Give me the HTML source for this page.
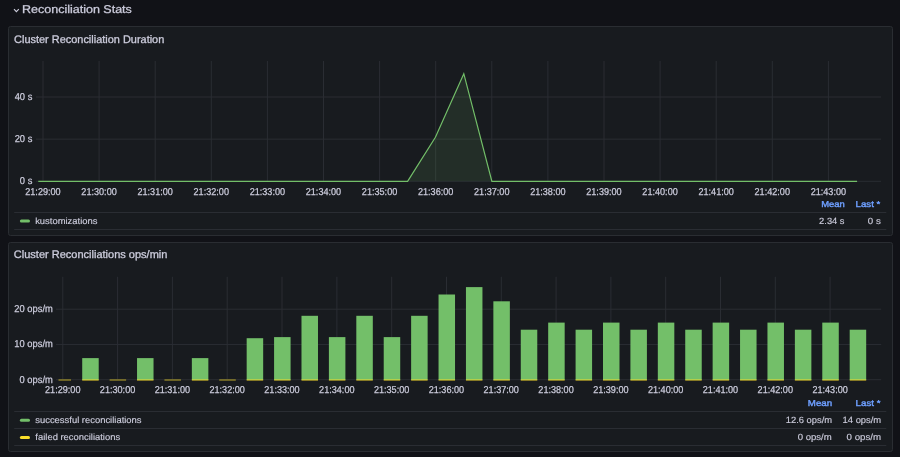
<!DOCTYPE html><html><head><meta charset="utf-8"><style>
html,body{margin:0;padding:0;width:900px;height:457px;overflow:hidden;background:#111217;}
svg{position:absolute;left:0;top:0;will-change:transform;}
text{font-family:"Liberation Sans", sans-serif;text-rendering:geometricPrecision;}
</style></head><body>
<svg width="900" height="457" viewBox="0 0 900 457">
<rect x="8.5" y="26.5" width="884" height="209" rx="2" fill="#181b1f" stroke="#2a2d32" stroke-width="1"/>
<rect x="8.5" y="242.5" width="884" height="209" rx="2" fill="#181b1f" stroke="#2a2d32" stroke-width="1"/>
<path d="M14 9.2 L16.4 11.6 L18.8 9.2" fill="none" stroke="#ccccdc" stroke-width="1.15"/>
<text x="21.97" y="13.25" font-size="11.3" fill="#ccccdc" stroke="#ccccdc" stroke-width="0.28" textLength="109.88" lengthAdjust="spacingAndGlyphs">Reconciliation Stats</text>
<text x="14.05" y="42.80" font-size="10.9" fill="#ccccdc" stroke="#ccccdc" stroke-width="0.3" textLength="150.25" lengthAdjust="spacingAndGlyphs">Cluster Reconciliation Duration</text>
<text x="13.85" y="258.30" font-size="10.9" fill="#ccccdc" stroke="#ccccdc" stroke-width="0.3" textLength="153.56" lengthAdjust="spacingAndGlyphs">Cluster Reconciliations ops/min</text>
<line x1="43.0" y1="61.0" x2="43.0" y2="181.3" stroke="#2a2d33" stroke-width="1"/>
<text x="25.25" y="195.00" font-size="10.0" fill="#ccccdc" stroke="#ccccdc" stroke-width="0.25" textLength="35.41" lengthAdjust="spacingAndGlyphs">21:29:00</text>
<line x1="99.1" y1="61.0" x2="99.1" y2="181.3" stroke="#2a2d33" stroke-width="1"/>
<text x="81.35" y="195.00" font-size="10.0" fill="#ccccdc" stroke="#ccccdc" stroke-width="0.25" textLength="35.41" lengthAdjust="spacingAndGlyphs">21:30:00</text>
<line x1="155.2" y1="61.0" x2="155.2" y2="181.3" stroke="#2a2d33" stroke-width="1"/>
<text x="137.45" y="195.00" font-size="10.0" fill="#ccccdc" stroke="#ccccdc" stroke-width="0.25" textLength="35.41" lengthAdjust="spacingAndGlyphs">21:31:00</text>
<line x1="211.3" y1="61.0" x2="211.3" y2="181.3" stroke="#2a2d33" stroke-width="1"/>
<text x="193.55" y="195.00" font-size="10.0" fill="#ccccdc" stroke="#ccccdc" stroke-width="0.25" textLength="35.41" lengthAdjust="spacingAndGlyphs">21:32:00</text>
<line x1="267.4" y1="61.0" x2="267.4" y2="181.3" stroke="#2a2d33" stroke-width="1"/>
<text x="249.65" y="195.00" font-size="10.0" fill="#ccccdc" stroke="#ccccdc" stroke-width="0.25" textLength="35.41" lengthAdjust="spacingAndGlyphs">21:33:00</text>
<line x1="323.5" y1="61.0" x2="323.5" y2="181.3" stroke="#2a2d33" stroke-width="1"/>
<text x="305.75" y="195.00" font-size="10.0" fill="#ccccdc" stroke="#ccccdc" stroke-width="0.25" textLength="35.41" lengthAdjust="spacingAndGlyphs">21:34:00</text>
<line x1="379.6" y1="61.0" x2="379.6" y2="181.3" stroke="#2a2d33" stroke-width="1"/>
<text x="361.85" y="195.00" font-size="10.0" fill="#ccccdc" stroke="#ccccdc" stroke-width="0.25" textLength="35.41" lengthAdjust="spacingAndGlyphs">21:35:00</text>
<line x1="435.7" y1="61.0" x2="435.7" y2="181.3" stroke="#2a2d33" stroke-width="1"/>
<text x="417.95" y="195.00" font-size="10.0" fill="#ccccdc" stroke="#ccccdc" stroke-width="0.25" textLength="35.41" lengthAdjust="spacingAndGlyphs">21:36:00</text>
<line x1="491.8" y1="61.0" x2="491.8" y2="181.3" stroke="#2a2d33" stroke-width="1"/>
<text x="474.05" y="195.00" font-size="10.0" fill="#ccccdc" stroke="#ccccdc" stroke-width="0.25" textLength="35.41" lengthAdjust="spacingAndGlyphs">21:37:00</text>
<line x1="547.9" y1="61.0" x2="547.9" y2="181.3" stroke="#2a2d33" stroke-width="1"/>
<text x="530.15" y="195.00" font-size="10.0" fill="#ccccdc" stroke="#ccccdc" stroke-width="0.25" textLength="35.41" lengthAdjust="spacingAndGlyphs">21:38:00</text>
<line x1="604.0" y1="61.0" x2="604.0" y2="181.3" stroke="#2a2d33" stroke-width="1"/>
<text x="586.25" y="195.00" font-size="10.0" fill="#ccccdc" stroke="#ccccdc" stroke-width="0.25" textLength="35.41" lengthAdjust="spacingAndGlyphs">21:39:00</text>
<line x1="660.1" y1="61.0" x2="660.1" y2="181.3" stroke="#2a2d33" stroke-width="1"/>
<text x="642.35" y="195.00" font-size="10.0" fill="#ccccdc" stroke="#ccccdc" stroke-width="0.25" textLength="35.41" lengthAdjust="spacingAndGlyphs">21:40:00</text>
<line x1="716.2" y1="61.0" x2="716.2" y2="181.3" stroke="#2a2d33" stroke-width="1"/>
<text x="698.45" y="195.00" font-size="10.0" fill="#ccccdc" stroke="#ccccdc" stroke-width="0.25" textLength="35.41" lengthAdjust="spacingAndGlyphs">21:41:00</text>
<line x1="772.3" y1="61.0" x2="772.3" y2="181.3" stroke="#2a2d33" stroke-width="1"/>
<text x="754.55" y="195.00" font-size="10.0" fill="#ccccdc" stroke="#ccccdc" stroke-width="0.25" textLength="35.41" lengthAdjust="spacingAndGlyphs">21:42:00</text>
<line x1="828.4" y1="61.0" x2="828.4" y2="181.3" stroke="#2a2d33" stroke-width="1"/>
<text x="810.65" y="195.00" font-size="10.0" fill="#ccccdc" stroke="#ccccdc" stroke-width="0.25" textLength="35.41" lengthAdjust="spacingAndGlyphs">21:43:00</text>
<line x1="36" y1="97.0" x2="881" y2="97.0" stroke="#2a2d33" stroke-width="1"/>
<text x="14.67" y="99.85" font-size="10.0" fill="#ccccdc" stroke="#ccccdc" stroke-width="0.25" textLength="17.67" lengthAdjust="spacingAndGlyphs">40 s</text>
<line x1="36" y1="139.15" x2="881" y2="139.15" stroke="#2a2d33" stroke-width="1"/>
<text x="14.67" y="142.00" font-size="10.0" fill="#ccccdc" stroke="#ccccdc" stroke-width="0.25" textLength="17.67" lengthAdjust="spacingAndGlyphs">20 s</text>
<line x1="36" y1="181.3" x2="881" y2="181.3" stroke="#2a2d33" stroke-width="1"/>
<text x="19.86" y="184.15" font-size="10.0" fill="#ccccdc" stroke="#ccccdc" stroke-width="0.25" textLength="12.47" lengthAdjust="spacingAndGlyphs">0 s</text>
<path d="M407.6,181.3 L435.4,137.2 L463.8,73.7 L491.9,181.3 Z" fill="#73bf69" fill-opacity="0.12"/>
<path d="M38.3,181.3 L407.6,181.3 L435.4,137.2 L463.8,73.7 L491.9,181.3 L857.1,181.3" fill="none" stroke="#73bf69" stroke-width="1.2"/>
<text x="821.23" y="207.10" font-size="8.6" fill="#6e9fff" stroke="#6e9fff" stroke-width="0.4" textLength="23.58" lengthAdjust="spacingAndGlyphs">Mean</text>
<text x="855.61" y="207.10" font-size="8.6" fill="#6e9fff" stroke="#6e9fff" stroke-width="0.4" textLength="24.74" lengthAdjust="spacingAndGlyphs">Last *</text>
<line x1="14.2" y1="212.5" x2="886.3" y2="212.5" stroke="#2a2d33" stroke-width="1"/>
<line x1="14.2" y1="229.5" x2="886.3" y2="229.5" stroke="#2a2d33" stroke-width="1"/>
<rect x="19.9" y="219.5" width="10.1" height="3" rx="1.5" fill="#73bf69"/>
<text x="35.17" y="224.00" font-size="9.0" fill="#ccccdc" stroke="#ccccdc" stroke-width="0.15" textLength="62.27" lengthAdjust="spacingAndGlyphs">kustomizations</text>
<text x="819.13" y="224.30" font-size="9.0" fill="#ccccdc" stroke="#ccccdc" stroke-width="0.15" textLength="25.40" lengthAdjust="spacingAndGlyphs">2.34 s</text>
<text x="867.82" y="224.30" font-size="9.0" fill="#ccccdc" stroke="#ccccdc" stroke-width="0.15" textLength="12.93" lengthAdjust="spacingAndGlyphs">0 s</text>
<line x1="62.8" y1="276.8" x2="62.8" y2="379.7" stroke="#2a2d33" stroke-width="1"/>
<text x="45.05" y="393.00" font-size="10.0" fill="#ccccdc" stroke="#ccccdc" stroke-width="0.25" textLength="35.41" lengthAdjust="spacingAndGlyphs">21:29:00</text>
<line x1="117.6" y1="276.8" x2="117.6" y2="379.7" stroke="#2a2d33" stroke-width="1"/>
<text x="99.86" y="393.00" font-size="10.0" fill="#ccccdc" stroke="#ccccdc" stroke-width="0.25" textLength="35.41" lengthAdjust="spacingAndGlyphs">21:30:00</text>
<line x1="172.4" y1="276.8" x2="172.4" y2="379.7" stroke="#2a2d33" stroke-width="1"/>
<text x="154.67" y="393.00" font-size="10.0" fill="#ccccdc" stroke="#ccccdc" stroke-width="0.25" textLength="35.41" lengthAdjust="spacingAndGlyphs">21:31:00</text>
<line x1="227.2" y1="276.8" x2="227.2" y2="379.7" stroke="#2a2d33" stroke-width="1"/>
<text x="209.48" y="393.00" font-size="10.0" fill="#ccccdc" stroke="#ccccdc" stroke-width="0.25" textLength="35.41" lengthAdjust="spacingAndGlyphs">21:32:00</text>
<line x1="282.0" y1="276.8" x2="282.0" y2="379.7" stroke="#2a2d33" stroke-width="1"/>
<text x="264.29" y="393.00" font-size="10.0" fill="#ccccdc" stroke="#ccccdc" stroke-width="0.25" textLength="35.41" lengthAdjust="spacingAndGlyphs">21:33:00</text>
<line x1="336.9" y1="276.8" x2="336.9" y2="379.7" stroke="#2a2d33" stroke-width="1"/>
<text x="319.10" y="393.00" font-size="10.0" fill="#ccccdc" stroke="#ccccdc" stroke-width="0.25" textLength="35.41" lengthAdjust="spacingAndGlyphs">21:34:00</text>
<line x1="391.7" y1="276.8" x2="391.7" y2="379.7" stroke="#2a2d33" stroke-width="1"/>
<text x="373.91" y="393.00" font-size="10.0" fill="#ccccdc" stroke="#ccccdc" stroke-width="0.25" textLength="35.41" lengthAdjust="spacingAndGlyphs">21:35:00</text>
<line x1="446.5" y1="276.8" x2="446.5" y2="379.7" stroke="#2a2d33" stroke-width="1"/>
<text x="428.72" y="393.00" font-size="10.0" fill="#ccccdc" stroke="#ccccdc" stroke-width="0.25" textLength="35.41" lengthAdjust="spacingAndGlyphs">21:36:00</text>
<line x1="501.3" y1="276.8" x2="501.3" y2="379.7" stroke="#2a2d33" stroke-width="1"/>
<text x="483.53" y="393.00" font-size="10.0" fill="#ccccdc" stroke="#ccccdc" stroke-width="0.25" textLength="35.41" lengthAdjust="spacingAndGlyphs">21:37:00</text>
<line x1="556.1" y1="276.8" x2="556.1" y2="379.7" stroke="#2a2d33" stroke-width="1"/>
<text x="538.34" y="393.00" font-size="10.0" fill="#ccccdc" stroke="#ccccdc" stroke-width="0.25" textLength="35.41" lengthAdjust="spacingAndGlyphs">21:38:00</text>
<line x1="610.9" y1="276.8" x2="610.9" y2="379.7" stroke="#2a2d33" stroke-width="1"/>
<text x="593.15" y="393.00" font-size="10.0" fill="#ccccdc" stroke="#ccccdc" stroke-width="0.25" textLength="35.41" lengthAdjust="spacingAndGlyphs">21:39:00</text>
<line x1="665.7" y1="276.8" x2="665.7" y2="379.7" stroke="#2a2d33" stroke-width="1"/>
<text x="647.96" y="393.00" font-size="10.0" fill="#ccccdc" stroke="#ccccdc" stroke-width="0.25" textLength="35.41" lengthAdjust="spacingAndGlyphs">21:40:00</text>
<line x1="720.5" y1="276.8" x2="720.5" y2="379.7" stroke="#2a2d33" stroke-width="1"/>
<text x="702.77" y="393.00" font-size="10.0" fill="#ccccdc" stroke="#ccccdc" stroke-width="0.25" textLength="35.41" lengthAdjust="spacingAndGlyphs">21:41:00</text>
<line x1="775.3" y1="276.8" x2="775.3" y2="379.7" stroke="#2a2d33" stroke-width="1"/>
<text x="757.58" y="393.00" font-size="10.0" fill="#ccccdc" stroke="#ccccdc" stroke-width="0.25" textLength="35.41" lengthAdjust="spacingAndGlyphs">21:42:00</text>
<line x1="830.1" y1="276.8" x2="830.1" y2="379.7" stroke="#2a2d33" stroke-width="1"/>
<text x="812.39" y="393.00" font-size="10.0" fill="#ccccdc" stroke="#ccccdc" stroke-width="0.25" textLength="35.41" lengthAdjust="spacingAndGlyphs">21:43:00</text>
<line x1="56" y1="309.2" x2="881.2" y2="309.2" stroke="#2a2d33" stroke-width="1"/>
<text x="14.35" y="312.00" font-size="10.0" fill="#ccccdc" stroke="#ccccdc" stroke-width="0.25" textLength="38.46" lengthAdjust="spacingAndGlyphs">20 ops/m</text>
<line x1="56" y1="344.45" x2="881.2" y2="344.45" stroke="#2a2d33" stroke-width="1"/>
<text x="14.35" y="347.25" font-size="10.0" fill="#ccccdc" stroke="#ccccdc" stroke-width="0.25" textLength="38.46" lengthAdjust="spacingAndGlyphs">10 ops/m</text>
<line x1="56" y1="379.7" x2="881.2" y2="379.7" stroke="#2a2d33" stroke-width="1"/>
<text x="19.55" y="382.50" font-size="10.0" fill="#ccccdc" stroke="#ccccdc" stroke-width="0.25" textLength="33.26" lengthAdjust="spacingAndGlyphs">0 ops/m</text>
<rect x="58.50" y="379.40" width="12.5" height="1.2" fill="#fade2a" fill-opacity="0.6"/>
<rect x="82.21" y="358.10" width="16.5" height="21.90" fill="#73bf69"/>
<rect x="82.21" y="379.40" width="16.5" height="1.2" fill="#fade2a" fill-opacity="0.8"/>
<rect x="109.62" y="379.40" width="16.5" height="1.2" fill="#fade2a" fill-opacity="0.6"/>
<rect x="137.03" y="358.10" width="16.5" height="21.90" fill="#73bf69"/>
<rect x="137.03" y="379.40" width="16.5" height="1.2" fill="#fade2a" fill-opacity="0.8"/>
<rect x="164.44" y="379.40" width="16.5" height="1.2" fill="#fade2a" fill-opacity="0.6"/>
<rect x="191.85" y="358.10" width="16.5" height="21.90" fill="#73bf69"/>
<rect x="191.85" y="379.40" width="16.5" height="1.2" fill="#fade2a" fill-opacity="0.8"/>
<rect x="219.26" y="379.40" width="16.5" height="1.2" fill="#fade2a" fill-opacity="0.6"/>
<rect x="246.67" y="338.20" width="16.5" height="41.80" fill="#73bf69"/>
<rect x="246.67" y="379.40" width="16.5" height="1.2" fill="#fade2a" fill-opacity="0.8"/>
<rect x="274.08" y="337.10" width="16.5" height="42.90" fill="#73bf69"/>
<rect x="274.08" y="379.40" width="16.5" height="1.2" fill="#fade2a" fill-opacity="0.8"/>
<rect x="301.49" y="315.80" width="16.5" height="64.20" fill="#73bf69"/>
<rect x="301.49" y="379.40" width="16.5" height="1.2" fill="#fade2a" fill-opacity="0.8"/>
<rect x="328.90" y="337.10" width="16.5" height="42.90" fill="#73bf69"/>
<rect x="328.90" y="379.40" width="16.5" height="1.2" fill="#fade2a" fill-opacity="0.8"/>
<rect x="356.31" y="315.80" width="16.5" height="64.20" fill="#73bf69"/>
<rect x="356.31" y="379.40" width="16.5" height="1.2" fill="#fade2a" fill-opacity="0.8"/>
<rect x="383.72" y="337.10" width="16.5" height="42.90" fill="#73bf69"/>
<rect x="383.72" y="379.40" width="16.5" height="1.2" fill="#fade2a" fill-opacity="0.8"/>
<rect x="411.13" y="315.80" width="16.5" height="64.20" fill="#73bf69"/>
<rect x="411.13" y="379.40" width="16.5" height="1.2" fill="#fade2a" fill-opacity="0.8"/>
<rect x="438.54" y="294.50" width="16.5" height="85.50" fill="#73bf69"/>
<rect x="438.54" y="379.40" width="16.5" height="1.2" fill="#fade2a" fill-opacity="0.8"/>
<rect x="465.95" y="287.10" width="16.5" height="92.90" fill="#73bf69"/>
<rect x="465.95" y="379.40" width="16.5" height="1.2" fill="#fade2a" fill-opacity="0.8"/>
<rect x="493.36" y="301.30" width="16.5" height="78.70" fill="#73bf69"/>
<rect x="493.36" y="379.40" width="16.5" height="1.2" fill="#fade2a" fill-opacity="0.8"/>
<rect x="520.77" y="329.70" width="16.5" height="50.30" fill="#73bf69"/>
<rect x="520.77" y="379.40" width="16.5" height="1.2" fill="#fade2a" fill-opacity="0.8"/>
<rect x="548.18" y="322.60" width="16.5" height="57.40" fill="#73bf69"/>
<rect x="548.18" y="379.40" width="16.5" height="1.2" fill="#fade2a" fill-opacity="0.8"/>
<rect x="575.59" y="329.70" width="16.5" height="50.30" fill="#73bf69"/>
<rect x="575.59" y="379.40" width="16.5" height="1.2" fill="#fade2a" fill-opacity="0.8"/>
<rect x="603.00" y="322.60" width="16.5" height="57.40" fill="#73bf69"/>
<rect x="603.00" y="379.40" width="16.5" height="1.2" fill="#fade2a" fill-opacity="0.8"/>
<rect x="630.41" y="329.70" width="16.5" height="50.30" fill="#73bf69"/>
<rect x="630.41" y="379.40" width="16.5" height="1.2" fill="#fade2a" fill-opacity="0.8"/>
<rect x="657.82" y="322.60" width="16.5" height="57.40" fill="#73bf69"/>
<rect x="657.82" y="379.40" width="16.5" height="1.2" fill="#fade2a" fill-opacity="0.8"/>
<rect x="685.23" y="329.70" width="16.5" height="50.30" fill="#73bf69"/>
<rect x="685.23" y="379.40" width="16.5" height="1.2" fill="#fade2a" fill-opacity="0.8"/>
<rect x="712.64" y="322.60" width="16.5" height="57.40" fill="#73bf69"/>
<rect x="712.64" y="379.40" width="16.5" height="1.2" fill="#fade2a" fill-opacity="0.8"/>
<rect x="740.05" y="329.70" width="16.5" height="50.30" fill="#73bf69"/>
<rect x="740.05" y="379.40" width="16.5" height="1.2" fill="#fade2a" fill-opacity="0.8"/>
<rect x="767.46" y="322.60" width="16.5" height="57.40" fill="#73bf69"/>
<rect x="767.46" y="379.40" width="16.5" height="1.2" fill="#fade2a" fill-opacity="0.8"/>
<rect x="794.87" y="329.70" width="16.5" height="50.30" fill="#73bf69"/>
<rect x="794.87" y="379.40" width="16.5" height="1.2" fill="#fade2a" fill-opacity="0.8"/>
<rect x="822.28" y="322.60" width="16.5" height="57.40" fill="#73bf69"/>
<rect x="822.28" y="379.40" width="16.5" height="1.2" fill="#fade2a" fill-opacity="0.8"/>
<rect x="849.69" y="329.70" width="16.5" height="50.30" fill="#73bf69"/>
<rect x="849.69" y="379.40" width="16.5" height="1.2" fill="#fade2a" fill-opacity="0.8"/>
<text x="807.80" y="405.80" font-size="8.6" fill="#6e9fff" stroke="#6e9fff" stroke-width="0.4" textLength="24.32" lengthAdjust="spacingAndGlyphs">Mean</text>
<text x="855.60" y="405.80" font-size="8.6" fill="#6e9fff" stroke="#6e9fff" stroke-width="0.4" textLength="24.84" lengthAdjust="spacingAndGlyphs">Last *</text>
<line x1="14.2" y1="411.5" x2="886.3" y2="411.5" stroke="#2a2d33" stroke-width="1"/>
<line x1="14.2" y1="428.5" x2="886.3" y2="428.5" stroke="#2a2d33" stroke-width="1"/>
<line x1="14.2" y1="445.5" x2="886.3" y2="445.5" stroke="#2a2d33" stroke-width="1"/>
<rect x="19.9" y="418.7" width="10.1" height="3" rx="1.5" fill="#73bf69"/>
<rect x="19.9" y="435.9" width="10.1" height="3" rx="1.5" fill="#fade2a"/>
<text x="35.25" y="422.90" font-size="9.0" fill="#ccccdc" stroke="#ccccdc" stroke-width="0.15" textLength="106.29" lengthAdjust="spacingAndGlyphs">successful reconciliations</text>
<text x="35.37" y="440.00" font-size="9.0" fill="#ccccdc" stroke="#ccccdc" stroke-width="0.15" textLength="84.77" lengthAdjust="spacingAndGlyphs">failed reconciliations</text>
<text x="785.79" y="422.80" font-size="9.0" fill="#ccccdc" stroke="#ccccdc" stroke-width="0.15" textLength="46.32" lengthAdjust="spacingAndGlyphs">12.6 ops/m</text>
<text x="842.59" y="422.80" font-size="9.0" fill="#ccccdc" stroke="#ccccdc" stroke-width="0.15" textLength="38.63" lengthAdjust="spacingAndGlyphs">14 ops/m</text>
<text x="797.73" y="439.80" font-size="9.0" fill="#ccccdc" stroke="#ccccdc" stroke-width="0.15" textLength="34.00" lengthAdjust="spacingAndGlyphs">0 ops/m</text>
<text x="846.62" y="439.80" font-size="9.0" fill="#ccccdc" stroke="#ccccdc" stroke-width="0.15" textLength="34.51" lengthAdjust="spacingAndGlyphs">0 ops/m</text>
</svg></body></html>
